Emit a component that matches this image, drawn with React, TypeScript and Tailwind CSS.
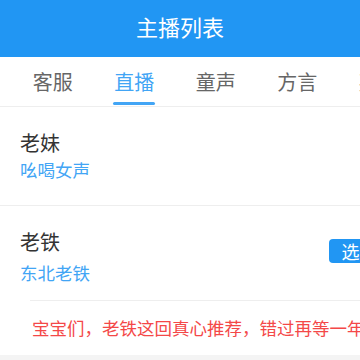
import React from 'react'

const tabs = ['客服', '直播', '童声', '方言', '英文']

const App = () => {
  return (
    <div
      className="w-[360px] h-[360px] overflow-hidden bg-[#f4f4f4] flex flex-col"
      style={{ fontFamily: '"Noto Sans CJK SC", "Noto Sans", sans-serif' }}
    >
      <header className="h-[57px] shrink-0 bg-[#2196f3] flex items-center justify-center pb-[6px]">
        <h1 className="text-white text-[22px] leading-none">主播列表</h1>
      </header>

      <nav className="h-[50px] shrink-0 bg-white border-b border-[#eeeeee] flex pl-[12px] overflow-hidden whitespace-nowrap">
        {tabs.map((t) => {
          const active = t === '直播'
          return (
            <div key={t} className="relative w-[81.5px] shrink-0 flex items-center justify-center">
              <span className={`text-[20px] leading-none ${active ? 'text-[#42a5f5]' : 'text-[#666666]'}`}>{t}</span>
              {active && (
                <span className="absolute bottom-[1px] left-1/2 -translate-x-1/2 w-[42px] h-[3px] rounded-full bg-[#42a5f5]" />
              )}
            </div>
          )
        })}
      </nav>

      <div className="bg-white">
        <div className="px-5 pt-[22px] pb-[23px] border-b border-[#eeeeee]">
          <div className="text-[20px] leading-[28px] text-[#333333]">老妹</div>
          <div className="mt-[1px] text-[17.5px] leading-[24px] text-[#42a5f5]">吆喝女声</div>
        </div>

        <div className="flex pl-5 -mr-[30px] pt-[22px] pb-[15px]">
          <div className="flex-1">
            <div className="text-[20px] leading-[28px] text-[#333333]">老铁</div>
            <div className="mt-[5px] text-[17.5px] leading-[24px] text-[#42a5f5]">东北老铁</div>
          </div>
          <button className="self-start mt-[11px] w-[61px] h-[24px] shrink-0 rounded-[4px] bg-[#2196f3] text-white text-[18px] leading-none">
            选择
          </button>
        </div>

        <div className="ml-[30px] h-px bg-[#eeeeee]" />

        <div className="h-[54px] flex items-center pl-[32px] whitespace-nowrap text-[17.5px] text-[#f44848]">
          宝宝们，老铁这回真心推荐，错过再等一年
        </div>
      </div>
    </div>
  )
}

export default App
